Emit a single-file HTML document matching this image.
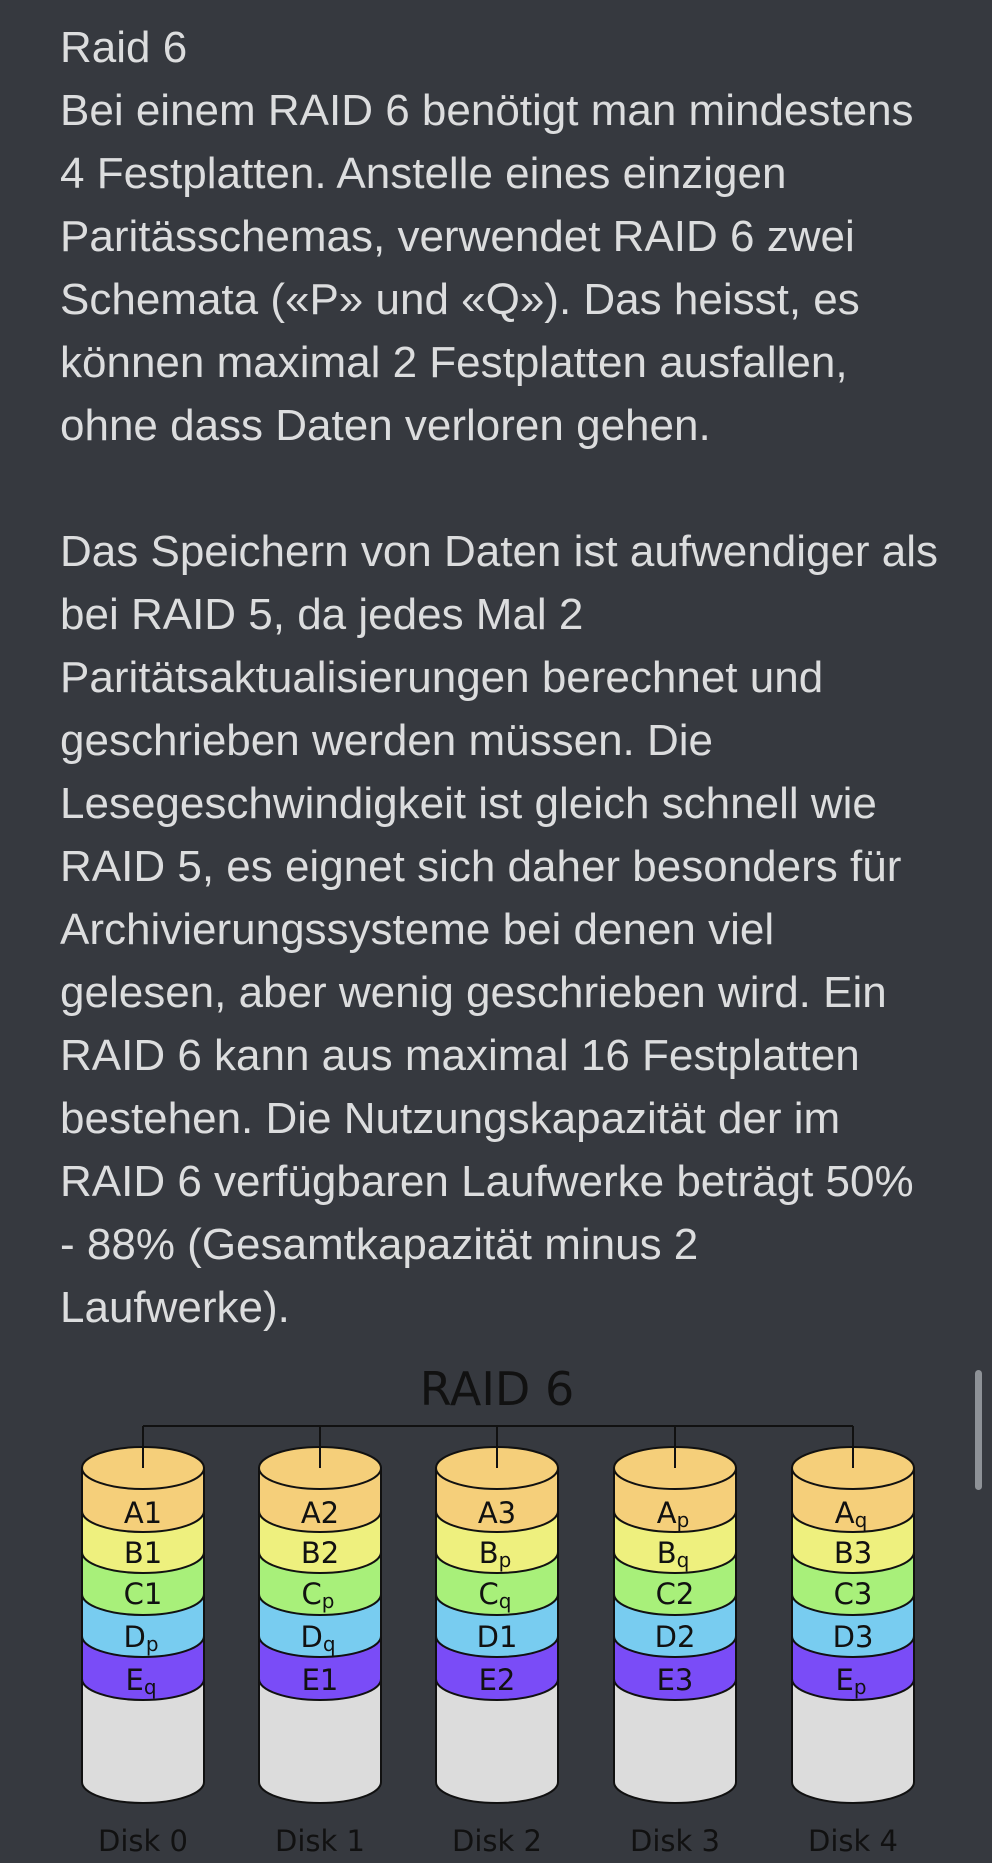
<!DOCTYPE html>
<html><head><meta charset="utf-8"><style>
html,body{margin:0;padding:0;background:#36393f;width:992px;height:1863px;overflow:hidden}
.t{position:absolute;left:60px;top:16px;color:#dcddde;font-family:"Liberation Sans",sans-serif;font-size:44px;line-height:63px;white-space:nowrap}
.sb{position:absolute;left:975px;top:1370px;width:7px;height:120px;border-radius:4px;background:#8e9297}
svg{position:absolute;left:0;top:0}
</style></head><body>
<div class="t">Raid 6<br>Bei einem RAID 6 benötigt man mindestens<br>4 Festplatten. Anstelle eines einzigen<br>Paritässchemas, verwendet RAID 6 zwei<br>Schemata («P» und «Q»). Das heisst, es<br>können maximal 2 Festplatten ausfallen,<br>ohne dass Daten verloren gehen.<br><br>Das Speichern von Daten ist aufwendiger als<br>bei RAID 5, da jedes Mal 2<br>Paritätsaktualisierungen berechnet und<br>geschrieben werden müssen. Die<br>Lesegeschwindigkeit ist gleich schnell wie<br>RAID 5, es eignet sich daher besonders für<br>Archivierungssysteme bei denen viel<br>gelesen, aber wenig geschrieben wird. Ein<br>RAID 6 kann aus maximal 16 Festplatten<br>bestehen. Die Nutzungskapazität der im<br>RAID 6 verfügbaren Laufwerke beträgt 50%<br>- 88% (Gesamtkapazität minus 2<br>Laufwerke).</div>
<svg width="992" height="1863" viewBox="0 0 992 1863" font-family="DejaVu Sans, sans-serif">
<defs>
<g id="disk" stroke="#111" stroke-width="2">
<path d="M-61 1468V1782A61 21 0 0 0 61 1782V1468Z" fill="#dcdcdc"/>
<path d="M-61 1468V1679A61 21 0 0 0 61 1679V1468Z" fill="#7a4cf7"/>
<path d="M-61 1468V1636A61 21 0 0 0 61 1636V1468Z" fill="#78ccf0"/>
<path d="M-61 1468V1594A61 21 0 0 0 61 1594V1468Z" fill="#a8f07a"/>
<path d="M-61 1468V1552A61 21 0 0 0 61 1552V1468Z" fill="#eef07e"/>
<path d="M-61 1468V1511A61 21 0 0 0 61 1511V1468Z" fill="#f5cf7a"/>
<ellipse cx="0" cy="1468" rx="61" ry="21" fill="#f5cf7a"/>
<line x1="0" y1="1426" x2="0" y2="1468"/>
</g>
</defs>
<text x="497" y="1405" text-anchor="middle" font-size="46" fill="#111">RAID 6</text>
<path d="M143 1426H853" stroke="#111" stroke-width="2"/>
<use href="#disk" transform="translate(143,0)"/>
<use href="#disk" transform="translate(320,0)"/>
<use href="#disk" transform="translate(497,0)"/>
<use href="#disk" transform="translate(675,0)"/>
<use href="#disk" transform="translate(853,0)"/>
<g font-size="29" fill="#111" text-anchor="middle">
<text x="143" y="1523">A1</text><text x="143" y="1563">B1</text><text x="143" y="1604">C1</text><text x="141" y="1647">D<tspan font-size="20" dy="4">p</tspan></text><text x="141" y="1690">E<tspan font-size="20" dy="4">q</tspan></text>
<text x="320" y="1523">A2</text><text x="320" y="1563">B2</text><text x="318" y="1604">C<tspan font-size="20" dy="4">p</tspan></text><text x="318" y="1647">D<tspan font-size="20" dy="4">q</tspan></text><text x="320" y="1690">E1</text>
<text x="497" y="1523">A3</text><text x="495" y="1563">B<tspan font-size="20" dy="4">p</tspan></text><text x="495" y="1604">C<tspan font-size="20" dy="4">q</tspan></text><text x="497" y="1647">D1</text><text x="497" y="1690">E2</text>
<text x="673" y="1523">A<tspan font-size="20" dy="4">p</tspan></text><text x="673" y="1563">B<tspan font-size="20" dy="4">q</tspan></text><text x="675" y="1604">C2</text><text x="675" y="1647">D2</text><text x="675" y="1690">E3</text>
<text x="851" y="1523">A<tspan font-size="20" dy="4">q</tspan></text><text x="853" y="1563">B3</text><text x="853" y="1604">C3</text><text x="853" y="1647">D3</text><text x="851" y="1690">E<tspan font-size="20" dy="4">p</tspan></text>
<text x="143" y="1851">Disk 0</text><text x="320" y="1851">Disk 1</text><text x="497" y="1851">Disk 2</text><text x="675" y="1851">Disk 3</text><text x="853" y="1851">Disk 4</text>
</g>
</svg>
<div class="sb"></div>
</body></html>
